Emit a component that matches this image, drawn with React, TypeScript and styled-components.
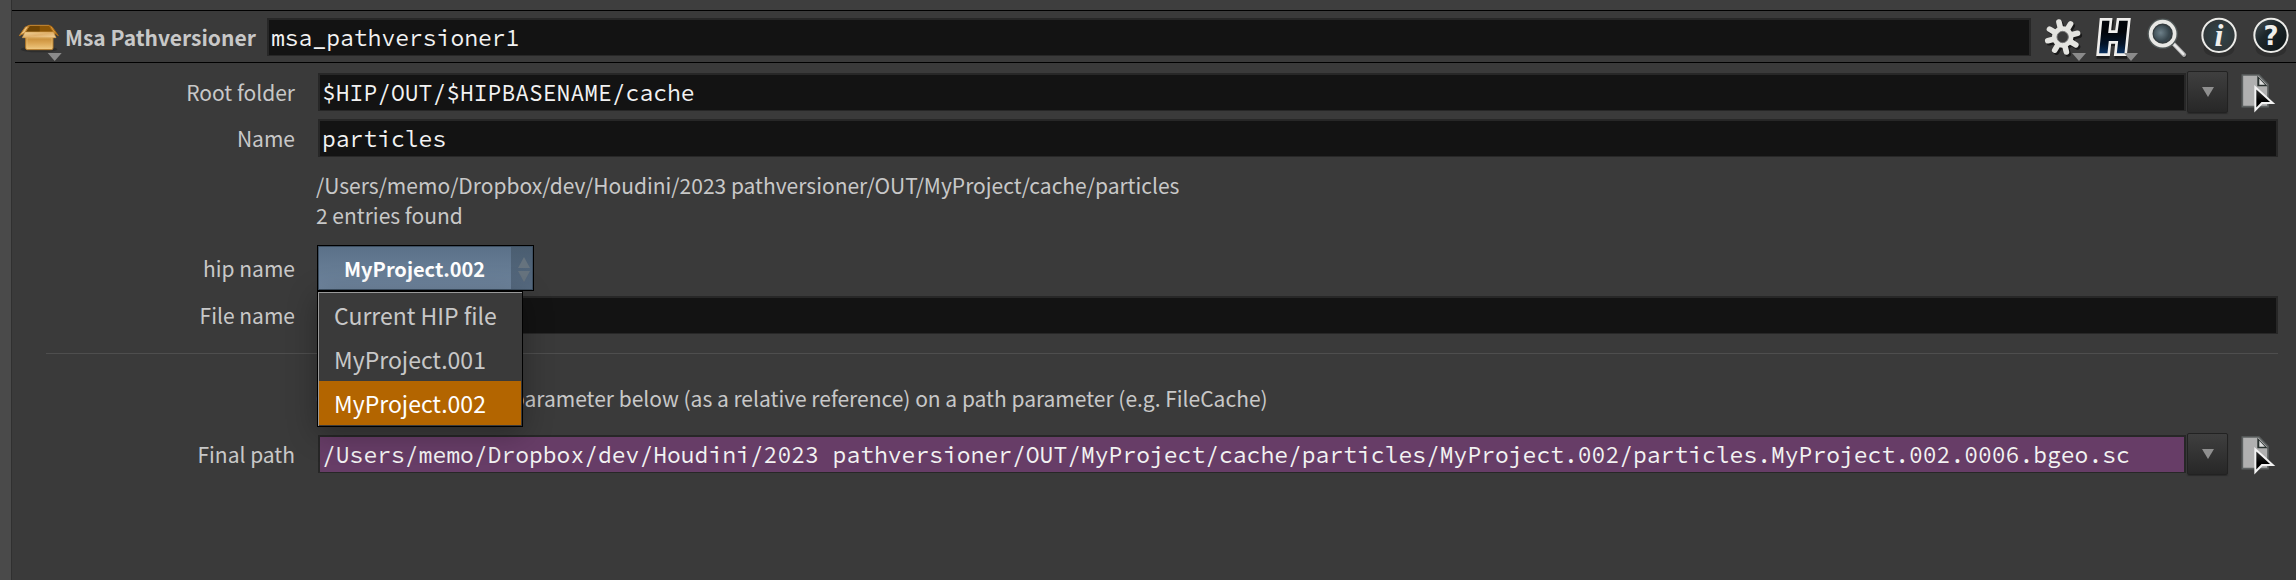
import React, { useState } from "react";
import styled, { createGlobalStyle } from "styled-components";

const SANS = `"Noto Sans CJK SC", "Noto Sans", sans-serif`;
const MONO = `"Source Code Pro", "Liberation Mono", monospace`;

const GlobalStyle = createGlobalStyle`
  * { box-sizing: border-box; }
  body { margin: 0; background: #3a3a3a; color: #c8c8c8; font-family: ${SANS}; font-size: 21px; line-height: 30px; }
  svg { display: block; }
`;

const Pane = styled.div`
  min-height: 100vh;
  border-left: 11px solid #4a4a4a;
  background: #3a3a3a;
  box-shadow: inset 1px 0 #303030;
  padding-left: 1px;
`;

const TopStrip = styled.div`
  height: 11px;
  background: #3e3e3e;
  border-bottom: 1px solid #000;
`;

const Header = styled.header`
  display: flex;
  align-items: center;
  height: 52px;
  margin-left: 3px;
  padding-left: 3px;
  border-bottom: 1px solid #000;
`;

const IconButton = styled.button<{ $width: number }>`
  flex: none;
  width: ${(p) => p.$width}px;
  padding: 0;
  border: 0;
  background: none;
`;

const Title = styled.label`
  flex: none;
  width: 202px;
  font-weight: 700;
  white-space: nowrap;
`;

const Field = styled.input<{ $linked?: boolean }>`
  flex: 1;
  min-width: 0;
  height: 38px;
  padding: 0 2px;
  border: 2px solid #272727;
  border-bottom-width: 1px;
  outline: 0;
  background: ${(p) => (p.$linked ? "#673d67" : "#131313")};
  color: #f2f2f2;
  font: 23px ${MONO};
`;

const Tools = styled.div`
  display: flex;
  flex: none;
  margin-left: 5px;
`;

const Form = styled.form`
  display: flex;
  flex-direction: column;
  gap: 2px;
  padding: 7px 18px 0 0;
`;

const Row = styled.div`
  display: grid;
  grid-template-columns: 283px 1fr;
  column-gap: 23px;
  align-items: center;
  min-height: 44px;
`;

const Label = styled.label`
  text-align: right;
`;

const Control = styled.div`
  display: flex;
  align-items: center;
  min-width: 0;
`;

const DropButton = styled.button`
  display: flex;
  align-items: center;
  justify-content: center;
  flex: none;
  width: 41px;
  height: 42px;
  margin: 0 12px 0 1px;
  padding: 0;
  border: 1px solid #222;
  border-radius: 2px;
  background: linear-gradient(#3f3f3f, #272727);
  box-shadow: 0 1px 1px #2b2b2b;
`;

const Note = styled.p`
  margin: 8px 0 0 304px;
`;

const SelectRow = styled(Row)`
  margin-top: 13px;
`;

const SelectBox = styled.div`
  position: relative;
  width: 217px;
  margin-left: -1px;
`;

const Select = styled.select`
  display: block;
  appearance: none;
  width: 100%;
  height: 46px;
  padding: 0 0 0 26px;
  border: 1px solid #000;
  border-radius: 0;
  outline: 0;
  background:
    linear-gradient(#4a5d70, #566a80) right / 22px 100% no-repeat,
    linear-gradient(#5a7088, #70869f);
  box-shadow: inset 0 0 0 1px #3d4f61;
  color: #fff;
  font: 700 20px ${SANS};
`;

const Stepper = styled.svg`
  position: absolute;
  top: 12px;
  right: 4px;
  pointer-events: none;
`;

const Menu = styled.div`
  position: absolute;
  z-index: 2;
  top: 46px;
  left: 0;
  width: 206px;
  padding: 1px;
  border: 1px solid #000;
  background: #3a3a3a;
  box-shadow: inset 1px 1px #999, 0 6px 28px rgba(0, 0, 0, 0.3);
`;

const MenuItem = styled.button<{ $active: boolean }>`
  display: block;
  width: 100%;
  height: 44px;
  padding: 0 15px;
  border: 0;
  background: ${(p) => (p.$active ? "#b36500" : "transparent")};
  color: ${(p) => (p.$active ? "#fff" : "#c8c8c8")};
  font: 23px ${SANS};
  line-height: 44px;
  text-align: left;
  white-space: nowrap;
`;

const Divider = styled.hr`
  align-self: stretch;
  height: 1px;
  margin: 14px 0 19px 34px;
  border: 0;
  background: #4e4e4e;
`;

const FinalRow = styled(Row)`
  margin-top: 17px;
`;

const Corner = ({ x, y }: { x: number; y: number }) => (
  <path d={`M${x} ${y}h42l-21 24z`} fill="#8b8b8b" />
);

const BoxIcon = () => (
  <svg width="47" height="51" viewBox="24 3 141 153">
    <defs>
      <linearGradient id="boxFront" x1="0" y1="0" x2="0" y2="1">
        <stop offset="0" stopColor="#bf822c" />
        <stop offset=".5" stopColor="#d9a350" />
        <stop offset="1" stopColor="#f0c982" />
      </linearGradient>
      <linearGradient id="boxFlap" x1="0" y1="0" x2="1" y2="1">
        <stop offset="0" stopColor="#f2d49c" />
        <stop offset=".5" stopColor="#e0b16c" />
        <stop offset="1" stopColor="#f1d19a" />
      </linearGradient>
    </defs>
    <ellipse cx="87" cy="118" rx="55" ry="9" fill="#222" opacity=".55" />
    <path d="M59 46h58l18 24H43z" fill="#8c5606" stroke="#c78a35" strokeWidth="3" />
    <path d="M60 48h29v20H46z" fill="#6f4403" />
    <path d="M58 46 44 69l-16 8 18-26z" fill="#e8bd78" stroke="#b87823" strokeWidth="3" />
    <path d="m117 46 14 22 14 9-19-27z" fill="#d3943b" stroke="#a86812" strokeWidth="3" />
    <path d="M47 76h82v38q0 5-5 5H52q-5 0-5-5z" fill="url(#boxFront)" stroke="#b47a28" strokeWidth="3" />
    <path d="M51 84h75v31H51z" fill="none" stroke="#f0cb88" strokeWidth="2" opacity=".7" />
    <path d="M45 66h85l8 17H37z" fill="url(#boxFlap)" stroke="#d5a050" strokeWidth="2" />
    <Corner x={113} y={129} />
  </svg>
);

const GearIcon = () => (
  <svg width="52" height="51" viewBox="0 3 156 153">
    {[
      { color: "#191919", dx: 5, dy: 6 },
      { color: "#e4e4e0", dx: 0, dy: 0 },
    ].map(({ color, dx, dy }) => (
      <g key={color} transform={`translate(${dx} ${dy})`} stroke={color} fill="none">
        {[0, 1, 2, 3, 4, 5, 6, 7].map((n) => (
          <path key={n} d="M80 56V35" strokeWidth="17" strokeLinecap="round" transform={`rotate(${n * 45 - 14} 80 81)`} />
        ))}
        <circle cx="80" cy="81" r="24" strokeWidth="16" />
      </g>
    ))}
    <circle cx="80" cy="81" r="17" fill="#3a3a3a" stroke="#777" strokeWidth="3" />
    <Corner x={108} y={129} />
  </svg>
);

const HoudiniIcon = () => (
  <svg width="52" height="51" viewBox="156 3 156 153">
    <defs>
      <linearGradient id="hFill" x1="0" y1="0" x2="0" y2="1">
        <stop offset=".35" stopColor="#02050a" />
        <stop offset=".7" stopColor="#041428" />
        <stop offset="1" stopColor="#0b3568" />
      </linearGradient>
    </defs>
    <path d="M201 34h30l-5 37h20l5-37h30l-11 109h-31l4-38h-22l-4 38h-32z" fill="#1c1c1c" stroke="#1c1c1c" strokeWidth="6" />
    <path d="M195 28h30l-4 37h20l5-37h34l-11 106h-31l4-37h-20l-4 37h-33z" fill="url(#hFill)" stroke="#f0efed" strokeWidth="8" />
    <Corner x={264} y={129} />
  </svg>
);

const SearchIcon = () => (
  <svg width="52" height="51" viewBox="0 3 156 153">
    <defs>
      <radialGradient id="lens" cx=".4" cy=".45">
        <stop offset="0" stopColor="#6d8089" />
        <stop offset="1" stopColor="#37454c" />
      </radialGradient>
    </defs>
    <path d="m101 105 33 33" stroke="#222" strokeWidth="12" strokeLinecap="round" opacity=".5" />
    <path d="m101 102 31 32" stroke="#a9a9a9" strokeWidth="13" strokeLinecap="round" />
    <path d="m100 101 30 31" stroke="#e9e9e9" strokeWidth="7" strokeLinecap="round" />
    <circle cx="68" cy="71" r="43" fill="none" stroke="#505858" strokeWidth="5" />
    <circle cx="68" cy="71" r="36" fill="#343c3f" stroke="#e8e8e5" strokeWidth="11" />
    <circle cx="67" cy="71" r="26" fill="url(#lens)" />
  </svg>
);

const Mark = styled.text<{ $serif?: boolean }>`
  fill: #efefec;
  font: ${(p) => (p.$serif ? `italic 700 96px "Liberation Serif", serif` : `700 78px "DejaVu Sans", sans-serif`)};
  text-anchor: middle;
`;

const RoundIcon = ({ mark }: { mark: "i" | "?" }) => (
  <svg width="52" height="51" viewBox="0 3 156 153">
    <defs>
      <linearGradient id="disc" x1="0" y1="0" x2="1" y2="1">
        <stop offset="0" stopColor="#4b5559" />
        <stop offset=".4" stopColor="#1d272b" />
        <stop offset="1" stopColor="#0a1113" />
      </linearGradient>
      <radialGradient id="discSoft">
        <stop offset="0" stopColor="#30464c" />
        <stop offset="1" stopColor="#303638" />
      </radialGradient>
    </defs>
    <ellipse cx="81" cy="117" rx="46" ry="24" fill="#242424" opacity=".5" />
    <circle cx="81" cy="76" r="50" fill={mark === "i" ? "url(#discSoft)" : "url(#disc)"} stroke="#ecece9" strokeWidth="6" />
    <Mark x="81" y={mark === "i" ? 108 : 105} $serif={mark === "i"}>{mark}</Mark>
  </svg>
);

const FilePickIcon = () => (
  <svg width="38" height="44" viewBox="180 15 114 132">
    <defs>
      <linearGradient id="cursorFill" x1="0" y1="0" x2="0" y2="1">
        <stop offset="0" stopColor="#3a3a3a" />
        <stop offset=".6" stopColor="#000" />
      </linearGradient>
    </defs>
    <path d="M187 30h50l27 28v67h-77z" fill="#b0b0b0" stroke="#5c6060" strokeWidth="5" />
    <path d="M232 32v32h31z" fill="#29312f" />
    <path d="M238 41v18h17z" fill="#dedede" />
    <path d="M226 67v68l20-21h32z" fill="url(#cursorFill)" stroke="#f2f2f2" strokeWidth="6" />
  </svg>
);

const PathTools = ({ name }: { name: string }) => (
  <>
    <DropButton type="button" aria-label={`${name} history`}>
      <svg width="12" height="10" viewBox="0 0 12 10">
        <path d="M0 0h12L6 10z" fill="#8f8f8f" />
      </svg>
    </DropButton>
    <IconButton type="button" $width={38} aria-label={`Choose ${name}`}>
      <FilePickIcon />
    </IconButton>
  </>
);

const HIP_NAMES = ["Current HIP file", "MyProject.001", "MyProject.002"];

export default function App() {
  const [hip, setHip] = useState("MyProject.002");
  return (
    <>
      <GlobalStyle />
      <Pane>
        <TopStrip />
        <Header>
          <IconButton $width={47} aria-label="Node presets"><BoxIcon /></IconButton>
          <Title htmlFor="node">Msa Pathversioner</Title>
          <Field id="node" defaultValue="msa_pathversioner1" spellCheck={false} />
          <Tools>
            <IconButton $width={52} aria-label="Settings"><GearIcon /></IconButton>
            <IconButton $width={52} aria-label="Houdini"><HoudiniIcon /></IconButton>
            <IconButton $width={52} aria-label="Search"><SearchIcon /></IconButton>
            <IconButton $width={52} aria-label="Info"><RoundIcon mark="i" /></IconButton>
            <IconButton $width={52} aria-label="Help"><RoundIcon mark="?" /></IconButton>
          </Tools>
        </Header>
        <Form onSubmit={(e) => e.preventDefault()}>
          <Row>
            <Label htmlFor="root">Root folder</Label>
            <Control>
              <Field id="root" defaultValue="$HIP/OUT/$HIPBASENAME/cache" spellCheck={false} />
              <PathTools name="root folder" />
            </Control>
          </Row>
          <Row>
            <Label htmlFor="name">Name</Label>
            <Control>
              <Field id="name" defaultValue="particles" spellCheck={false} />
            </Control>
          </Row>
          <Note>
            /Users/memo/Dropbox/dev/Houdini/2023 pathversioner/OUT/MyProject/cache/particles
            <br />
            2 entries found
          </Note>
          <SelectRow>
            <Label htmlFor="hip">hip name</Label>
            <SelectBox>
              <Select id="hip" value={hip} onChange={(e) => setHip(e.target.value)}>
                {HIP_NAMES.map((n) => <option key={n}>{n}</option>)}
              </Select>
              <Stepper width="12" height="25" viewBox="0 0 12 25">
                <path d="M6 0l6 11H0zM0 14h12L6 25z" fill="#66737e" />
              </Stepper>
              <Menu role="listbox">
                {HIP_NAMES.map((n) => (
                  <MenuItem key={n} type="button" role="option" aria-selected={n === hip} $active={n === hip} onClick={() => setHip(n)}>
                    {n}
                  </MenuItem>
                ))}
              </Menu>
            </SelectBox>
          </SelectRow>
          <Row>
            <Label htmlFor="file">File name</Label>
            <Control>
              <Field id="file" defaultValue="" />
            </Control>
          </Row>
          <Divider />
          <Note>Copy and paste this parameter below (as a relative reference) on a path parameter (e.g. FileCache)</Note>
          <FinalRow>
            <Label htmlFor="final">Final path</Label>
            <Control>
              <Field
                id="final"
                $linked
                defaultValue="/Users/memo/Dropbox/dev/Houdini/2023 pathversioner/OUT/MyProject/cache/particles/MyProject.002/particles.MyProject.002.0006.bgeo.sc"
                spellCheck={false}
              />
              <PathTools name="final path" />
            </Control>
          </FinalRow>
        </Form>
      </Pane>
    </>
  );
}
